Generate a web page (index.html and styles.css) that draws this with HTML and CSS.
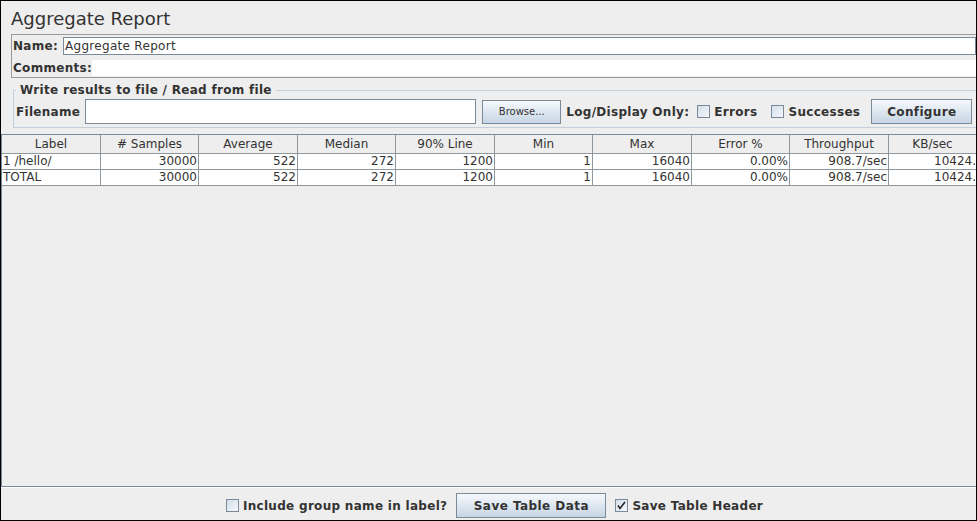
FILE: index.html
```html
<!DOCTYPE html>
<html lang="en">
<head>
<meta charset="utf-8">
<title>Aggregate Report</title>
<link rel="stylesheet" href="styles.css">
</head>
<body>
<div class="window">
  <div class="title">Aggregate Report</div>

  <div class="name-panel">
    <div class="np-row">
      <span class="lbl">Name:</span>
      <div class="field name-field">Aggregate Report</div>
    </div>
    <div class="np-row comments-row">
      <span class="lbl">Comments:</span>
      <div class="comments-field"></div>
    </div>
  </div>

  <fieldset class="group">
    <legend class="legend">Write results to file / Read from file</legend>
    <div class="file-row">
      <span class="lbl">Filename</span>
      <div class="field file-field"></div>
      <button class="btn btn-browse" type="button">Browse...</button>
      <span class="lbl log-lbl">Log/Display Only:</span>
      <span class="check"><span class="box"></span><span class="lbl">Errors</span></span>
      <span class="check succ"><span class="box"></span><span class="lbl">Successes</span></span>
      <button class="btn btn-config" type="button">Configure</button>
    </div>
  </fieldset>

  <div class="scrollpane">
    <div class="grid">
      <div class="hc">Label</div>
      <div class="hc"># Samples</div>
      <div class="hc">Average</div>
      <div class="hc">Median</div>
      <div class="hc">90% Line</div>
      <div class="hc">Min</div>
      <div class="hc">Max</div>
      <div class="hc">Error %</div>
      <div class="hc">Throughput</div>
      <div class="hc last">KB/sec</div>

      <div class="dc left">1 /hello/</div>
      <div class="dc">30000</div>
      <div class="dc">522</div>
      <div class="dc">272</div>
      <div class="dc">1200</div>
      <div class="dc">1</div>
      <div class="dc">16040</div>
      <div class="dc">0.00%</div>
      <div class="dc">908.7/sec</div>
      <div class="dc last">10424.</div>

      <div class="dc left">TOTAL</div>
      <div class="dc">30000</div>
      <div class="dc">522</div>
      <div class="dc">272</div>
      <div class="dc">1200</div>
      <div class="dc">1</div>
      <div class="dc">16040</div>
      <div class="dc">0.00%</div>
      <div class="dc">908.7/sec</div>
      <div class="dc last">10424.</div>
    </div>
  </div>

  <div class="bottom-bar">
    <span class="check"><span class="box"></span><span class="lbl">Include group name in label?</span></span>
    <button class="btn btn-save" type="button">Save Table Data</button>
    <span class="check"><span class="box checked"><svg width="11" height="11" viewBox="0 0 11 11"><path d="M2 5.5 L4 8.5 L9 2" fill="none" stroke="#222" stroke-width="1.6"/></svg></span><span class="lbl">Save Table Header</span></span>
  </div>
</div>
</body>
</html>
```

FILE: styles.css
```css
* { box-sizing: border-box; }

html, body {
  margin: 0;
  padding: 0;
  background: #eeeeee;
}

body {
  font-family: "DejaVu Sans", "Liberation Sans", sans-serif;
  font-size: 12px;
  color: #222;
}

.window {
  width: 977px;
  height: 521px;
  border: 1px solid #000;
  background: #eeeeee;
  display: flex;
  flex-direction: column;
  overflow: hidden;
}

.title {
  padding: 7px 0 0 10px;
  font-size: 18px;
  line-height: 22px;
  color: #333;
  flex: none;
}

.lbl {
  font-weight: bold;
  white-space: nowrap;
  color: #333;
  letter-spacing: 0.3px;
}

/* Name / comments panel */
.name-panel {
  margin: 4px -1px 0 10px;
  height: 44px;
  border: 1px solid #9a9a9a;
  padding: 2px 0 1px 1px;
  display: flex;
  flex-direction: column;
  gap: 5px;
  flex: none;
}

.np-row {
  display: flex;
  align-items: center;
  height: 18px;
}

.np-row .lbl { width: 50px; }

.comments-row { height: 16px; }
.comments-row .lbl { width: 79px; }

.field {
  background: #fff;
  border: 1px solid #7a8a99;
}

.name-field {
  flex: 1;
  height: 18px;
  line-height: 16px;
  padding-left: 1px;
  color: #333;
  letter-spacing: 0.3px;
}

.comments-field {
  flex: 1;
  height: 16px;
  background: #fff;
}

/* Group */
.group {
  margin: 5px -2px 0 12px;
  padding: 0 0 3px 2px;
  border: 1px solid #c3cfdb;
  min-width: 0;
  flex: none;
}

.legend {
  padding: 0 4px 0 4px;
  font-weight: bold;
  line-height: 14px;
  color: #333;
  letter-spacing: 0.3px;
}

.file-row {
  margin-top: 2px;
  height: 25px;
  display: flex;
  align-items: center;
}

.file-field {
  width: 391px;
  height: 25px;
  margin-left: 5px;
}

.btn {
  font-family: "DejaVu Sans", "Liberation Sans", sans-serif;
  border: 1px solid #7a8a99;
  background: linear-gradient(#f6f9fc, #dbe5ef 55%, #c6d5e4);
  color: #333;
  padding: 0;
  margin: 0;
}

.btn-browse {
  width: 79px;
  height: 24px;
  margin-left: 6px;
  font-size: 10px;
}

.log-lbl { margin-left: 5px; }

.check {
  display: inline-flex;
  align-items: center;
  gap: 4px;
}

.file-row .check { margin-left: 8px; }
.file-row .check.succ { margin-left: 14px; }

.box {
  width: 13px;
  height: 13px;
  border: 1px solid #7a8a99;
  background: linear-gradient(135deg, #d3deea, #f5f8fb);
  display: inline-flex;
  align-items: center;
  justify-content: center;
  flex: none;
}

.box svg { display: block; }

.btn-config {
  width: 101px;
  height: 25px;
  margin-left: 11px;
  font-size: 12px;
  font-weight: bold;
  letter-spacing: 0.35px;
}

/* Table */
.scrollpane {
  margin-top: 6px;
  flex: 1;
  border-top: 1px solid #7a8a99;
  border-left: 1px solid #7a8a99;
  border-bottom: 1px solid #7a8a99;
  overflow: hidden;
}

.grid {
  display: grid;
  grid-template-columns: 99px 98px 99px 98px 99px 98px 99px 98px 99px 87px;
  grid-template-rows: 19px 16px 16px;
}

.hc {
  border-right: 1px solid #8f979f;
  border-bottom: 1px solid #8f979f;
  text-align: center;
  line-height: 19px;
  color: #333;
  white-space: nowrap;
}

.dc {
  background: #fff;
  border-right: 1px solid #8f979f;
  border-bottom: 1px solid #8f979f;
  text-align: right;
  line-height: 15px;
  padding-right: 1px;
  color: #333;
  white-space: nowrap;
  overflow: hidden;
}

.dc.left {
  text-align: left;
  padding-left: 1px;
}

.hc.last, .dc.last { border-right: none; }
.dc.last { padding-right: 0; }

/* Bottom bar */
.bottom-bar {
  flex: none;
  height: 33px;
  border-top: 1px solid #fff;
  padding: 3px 0 0 12px;
  display: flex;
  justify-content: center;
  align-items: center;
  gap: 8px;
}

.btn-save {
  width: 150px;
  height: 25px;
  font-size: 12px;
  font-weight: bold;
  margin: 0 1px;
  letter-spacing: 0.45px;
}
```
